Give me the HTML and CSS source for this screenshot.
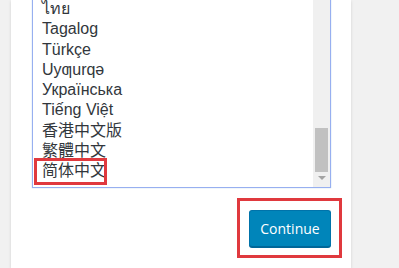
FILE: index.html
```html
<!DOCTYPE html>
<html>
<head>
<meta charset="utf-8">
<link rel="stylesheet" href="styles.css">
</head>
<body>
<div class="card">
  <div class="list">
    <div class="items">
      <div class="item">ไทย</div>
      <div class="item">Tagalog</div>
      <div class="item">Türkçe</div>
      <div class="item">Uyƣurqə</div>
      <div class="item">Українська</div>
      <div class="item">Tiếng Việt</div>
      <div class="item cjk">香港中文版</div>
      <div class="item cjk">繁體中文</div>
      <div class="item cjk marked">简体中文</div>
    </div>
    <div class="scrollbar">
      <div class="track"><div class="thumb"></div></div>
      <div class="arrow"></div>
    </div>
  </div>
  <div class="actions">
    <div class="highlight">
      <button class="button">Continue</button>
    </div>
  </div>
</div>
</body>
</html>
```
FILE: styles.css
```css
html, body {
  margin: 0;
  padding: 0;
}
body {
  background: #f1f1f1;
  width: 399px;
  height: 268px;
  overflow: hidden;
}
.card {
  display: flow-root;
  margin-left: 11px;
  width: 340px;
  height: 268px;
  background: #fff;
  box-shadow: 0 1px 3px rgba(0, 0, 0, 0.13);
  padding-left: 21px;
  box-sizing: border-box;
}
.list {
  width: 299px;
  margin-top: -10px;
  height: 198px;
  box-sizing: border-box;
  border: 1px solid #97aff0;
  box-shadow: 0 0 1px rgba(91, 157, 217, 0.5);
  display: flex;
  background: #fff;
}
.items {
  flex: 1;
  padding-top: 8px;
  padding-left: 9px;
  font-family: "Liberation Sans", Arial, sans-serif;
  font-size: 16px;
  color: #32373c;
}
.item {
  height: 20.25px;
  line-height: 20.25px;
  white-space: nowrap;
}
.cjk {
  font-family: "Liberation Sans", "Noto Sans CJK SC", sans-serif;
}
.marked {
  position: relative;
}
.marked::after {
  content: "";
  position: absolute;
  left: -8px;
  top: -3px;
  width: 73px;
  height: 27px;
  box-sizing: border-box;
  border: 3px solid #e0393e;
}
.scrollbar {
  width: 17px;
  background: #f0f0f0;
  display: flex;
  flex-direction: column;
}
.track {
  flex: 1;
  position: relative;
}
.thumb {
  position: absolute;
  left: 2px;
  right: 2px;
  top: 137px;
  height: 44px;
  background: #c1c1c1;
}
.arrow {
  height: 15px;
  position: relative;
}
.arrow::after {
  content: "";
  position: absolute;
  left: 5px;
  top: 4px;
  border-left: 4px solid transparent;
  border-right: 4px solid transparent;
  border-top: 4px solid #a3a3a3;
}
.actions {
  display: flex;
  justify-content: flex-end;
  margin-top: 10px;
  width: 310px;
}
.highlight {
  border: 3px solid #e0393e;
  width: 105px;
  height: 60px;
  box-sizing: border-box;
  display: flex;
  align-items: center;
  justify-content: center;
  padding-left: 1px;
}
.button {
  width: 82px;
  height: 37px;
  background: #0085ba;
  border: 1px solid #0073aa;
  border-bottom-color: #006799;
  border-radius: 3px;
  box-shadow: 0 1px 0 #006799;
  color: #fff;
  font-family: "Open Sans", "Noto Sans", sans-serif;
  font-size: 14px;
  padding: 0;
  margin: 0;
}
```
